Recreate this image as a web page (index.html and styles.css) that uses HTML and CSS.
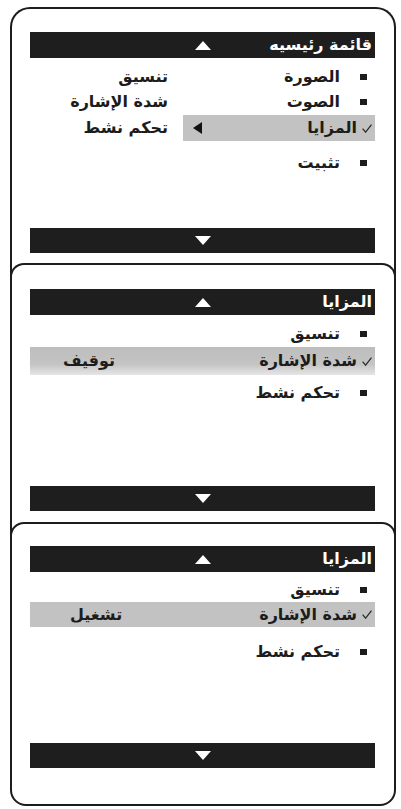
FILE: index.html
```html
<!DOCTYPE html>
<html lang="ar">
<head>
<meta charset="utf-8">
<title>المزايا</title>
<link rel="stylesheet" href="styles.css">
</head>
<body>
<main class="stack">
  <section class="panel panel-main">
    <div class="bar"><span class="bar-title">قائمة رئيسيه</span><span class="tri tri-up"></span><span></span></div>
    <div class="menu menu-main">
      <div class="row">
        <div class="item"><span class="sq"></span><span class="label">الصورة</span></div>
        <div class="value">تنسيق</div>
      </div>
      <div class="row">
        <div class="item"><span class="sq"></span><span class="label">الصوت</span></div>
        <div class="value">شدة الإشارة</div>
      </div>
      <div class="row row-sel">
        <div class="item band"><svg class="check" viewBox="0 0 10 9"><path d="M0.6 4.6 L3.6 8.2 L9.5 0.6"/></svg><span class="label">المزايا</span><span class="tri tri-left"></span></div>
        <div class="value">تحكم نشط</div>
      </div>
      <div class="row row-gap">
        <div class="item"><span class="sq"></span><span class="label">تثبيت</span></div>
      </div>
    </div>
    <div class="bar bar-foot"><span></span><span class="tri tri-down"></span><span></span></div>
  </section>

  <section class="panel panel-mid">
    <div class="bar"><span class="bar-title">المزايا</span><span class="tri tri-up"></span><span></span></div>
    <div class="menu menu-b">
      <div class="row">
        <div class="item"><span class="sq"></span><span class="label">تنسيق</span></div>
      </div>
      <div class="row band band-soft">
        <div class="item"><svg class="check" viewBox="0 0 10 9"><path d="M0.6 4.6 L3.6 8.2 L9.5 0.6"/></svg><span class="label">شدة الإشارة</span></div>
        <div class="state">توقيف</div>
      </div>
      <div class="row row-after">
        <div class="item"><span class="sq"></span><span class="label">تحكم نشط</span></div>
      </div>
    </div>
    <div class="bar bar-foot"><span></span><span class="tri tri-down"></span><span></span></div>
  </section>

  <section class="panel panel-last">
    <div class="bar"><span class="bar-title">المزايا</span><span class="tri tri-up"></span><span></span></div>
    <div class="menu menu-c">
      <div class="row">
        <div class="item"><span class="sq"></span><span class="label">تنسيق</span></div>
      </div>
      <div class="row band">
        <div class="item"><svg class="check" viewBox="0 0 10 9"><path d="M0.6 4.6 L3.6 8.2 L9.5 0.6"/></svg><span class="label">شدة الإشارة</span></div>
        <div class="state state-c">تشغيل</div>
      </div>
      <div class="row row-after-c">
        <div class="item"><span class="sq"></span><span class="label">تحكم نشط</span></div>
      </div>
    </div>
    <div class="bar bar-foot"><span></span><span class="tri tri-down"></span><span></span></div>
  </section>
</main>
</body>
</html>
```
FILE: styles.css
```css
* { box-sizing: border-box; }

html, body {
  margin: 0;
  padding: 0;
  background: #fff;
}

body {
  font-family: "DejaVu Sans", sans-serif;
  color: #1c1c1c;
}

.stack {
  width: 401px;
  height: 809px;
  padding-top: 7px;
  padding-left: 10px;
  overflow: hidden;
}

.panel {
  width: 386px;
  border: 2px solid #1c1c1c;
  background: #fff;
  padding-left: 18px;
  padding-right: 19px;
  direction: rtl;
}

.panel-main {
  border-bottom: none;
  border-radius: 20px 20px 0 0;
  padding-top: 23px;
  padding-bottom: 30px;
}

.panel-mid {
  margin-top: -20px;
  border-bottom: none;
  border-radius: 14px 14px 0 0;
  padding-top: 24px;
  padding-bottom: 31px;
}

.panel-last {
  margin-top: -20px;
  border-radius: 14px 14px 16px 16px;
  padding-top: 22px;
  padding-bottom: 36px;
}

/* bars */
.bar {
  height: 26px;
  background: #1e1e1e;
  display: grid;
  grid-template-columns: 1fr auto 1fr;
  align-items: center;
}

.bar-foot { height: 25px; }

.bar-title {
  justify-self: start;
  color: #fff;
  font-weight: bold;
  font-size: 16px;
  line-height: 1;
  padding-right: 3px;
}

.tri {
  display: block;
  width: 0;
  height: 0;
}

.tri-up {
  border-left: 8px solid transparent;
  border-right: 8px solid transparent;
  border-bottom: 9px solid #fff;
}

.tri-down {
  border-left: 8px solid transparent;
  border-right: 8px solid transparent;
  border-top: 9px solid #fff;
}

.tri-left {
  border-top: 6px solid transparent;
  border-bottom: 6px solid transparent;
  border-right: 9px solid #111;
  margin-right: auto;
  margin-left: 10px;
}

/* menus */
.menu { height: 171px; }
.menu-main { height: 170px; padding-top: 6px; }
.menu-b { padding-top: 6px; }
.menu-c { padding-top: 5px; }

.row {
  display: flex;
  align-items: center;
  height: 25px;
}

.row-sel {
  height: 26px;
  margin-top: 1px;
}

.row-gap { margin-top: 9px; }
.row-after { margin-top: 5px; }
.row-after-c { margin-top: 12px; }

.item {
  display: flex;
  align-items: center;
  height: 100%;
}

.menu-main .item { width: 192px; }

.band { background: #c2c2c2; }

.band-soft {
  height: 28px;
  margin-top: 1px;
  background: linear-gradient(to bottom, #bdbdbd 0%, #c4c4c4 62%, #e6e6e6 100%);
}

.label {
  font-weight: bold;
  font-size: 16px;
  line-height: 1;
  white-space: nowrap;
}

.sq {
  width: 7px;
  height: 6px;
  background: #1c1c1c;
  margin-right: 8px;
  margin-left: 20px;
  flex: none;
}

.check {
  width: 10px;
  height: 9px;
  margin-right: 3px;
  margin-left: 5px;
  flex: none;
  fill: none;
  stroke: #2a2a2a;
  stroke-width: 1.2;
}

.value {
  flex: 1;
  padding-right: 15px;
  font-weight: bold;
  font-size: 16px;
  line-height: 1;
  white-space: nowrap;
}

.state {
  margin-right: auto;
  padding-left: 33px;
  font-weight: bold;
  font-size: 16px;
  line-height: 1;
}

.state-c { padding-left: 40px; }
```
